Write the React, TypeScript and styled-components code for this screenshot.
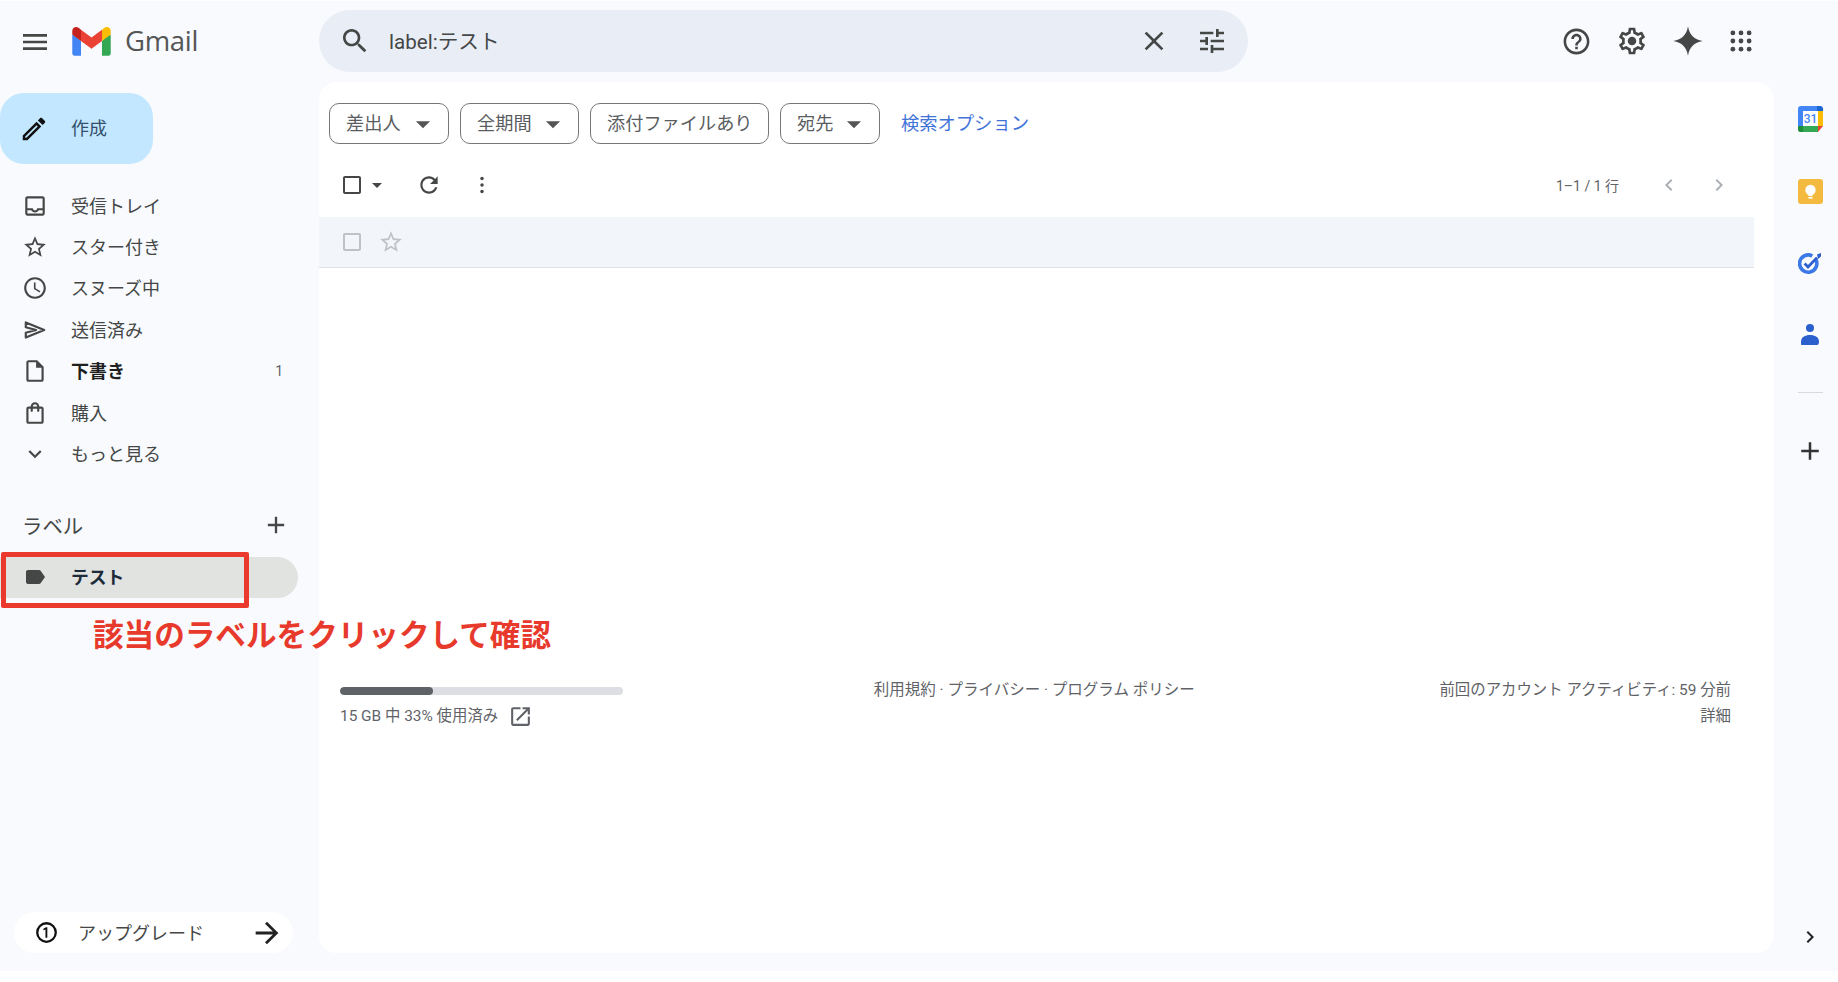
import React from 'react';
import styled, { createGlobalStyle } from 'styled-components';

const Global = createGlobalStyle`
  html, body { margin: 0; padding: 0; background: #fff; }
  body { font-family: Roboto, "Noto Sans CJK JP", sans-serif; color: #444746; }
  * { box-sizing: border-box; }
`;

const Page = styled.div`
  width: 1838px;
  height: 982px;
  padding-top: 1px;
  overflow: hidden;
  background: #fff;
`;
const Shell = styled.div`
  height: 970px;
  background: #f8fafd;
  display: grid;
  grid-template-columns: 319px 1455px 64px;
  grid-template-rows: 81px 871px 18px;
`;
const Brand = styled.div`
  display: flex;
  align-items: center;
  padding-left: 19px;
`;
const Wordmark = styled.span`
  margin: 0 0 2px 14px;
  font-family: "Open Sans", sans-serif;
  font-size: 27.5px;
  letter-spacing: -0.3px;
  color: #555;
`;
const LogoSvg = styled.svg`
  width: 39px;
  height: 29px;
  margin-left: 21px;
  flex: none;
`;
const TopBar = styled.div`
  display: flex;
  align-items: center;
  justify-content: space-between;
  padding-right: 20px;
`;
const SearchBox = styled.div`
  width: 929px;
  height: 62px;
  margin-top: -1px;
  border-radius: 31px;
  background: #e9eef6;
  display: flex;
  align-items: center;
  padding: 0 20px;
`;
const SearchText = styled.span`
  margin: 0 0 3px 18px;
  flex: 1;
  font-size: 20.6px;
  color: #444746;
`;
const Glyph = styled.svg<{ $s?: number; $c?: string; $ml?: number }>`
  width: ${p => p.$s ?? 24}px;
  height: ${p => p.$s ?? 24}px;
  margin-left: ${p => p.$ml ?? 0}px;
  fill: ${p => p.$c ?? '#444746'};
  flex: none;
  display: block;
`;
const StrokeGlyph = styled.svg`
  width: 26px;
  height: 26px;
  fill: none;
  stroke: #444746;
  stroke-width: 2;
  stroke-linejoin: round;
  flex: none;
  display: block;
`;
const Actions = styled.div`
  display: flex;
  align-items: center;
  gap: 24px;
  margin-top: -1px;
`;
const Sidebar = styled.aside`
  grid-row: 2;
  grid-column: 1;
  display: flex;
  flex-direction: column;
  padding-top: 11px;
`;
const Compose = styled.div`
  width: 153px;
  height: 71px;
  border-radius: 24px;
  background: #c2e7ff;
  display: flex;
  align-items: center;
  padding-left: 19px;
  gap: 22px;
  font-size: 18px;
  color: #34506b;
`;
const ComposeText = styled.span`
  margin-bottom: 4px;
`;
const Nav = styled.nav`
  margin-top: 21px;
  display: flex;
  flex-direction: column;
`;
const Row = styled.div<{ $bold?: boolean }>`
  height: 41.4px;
  display: flex;
  align-items: center;
  gap: 23px;
  padding: 0 22px;
  font-size: 18px;
  font-weight: ${p => (p.$bold ? 700 : 400)};
  color: ${p => (p.$bold ? '#1f1f1f' : '#444746')};
`;
const RowText = styled.span`
  margin-bottom: 2px;
`;
const Count = styled.span`
  margin-left: auto;
  font-size: 14px;
  font-weight: 400;
  color: #5f6368;
  margin-right: 14px;
`;
const LabelsHead = styled.div`
  margin-top: 30px;
  height: 41px;
  display: flex;
  align-items: center;
  justify-content: space-between;
  padding: 0 9px 0 22px;
  font-size: 20.4px;
  color: #444746;
  width: 299px;
`;
const LabelRow = styled.div`
  position: relative;
  margin-top: 11px;
  width: 298px;
  height: 41px;
  border-radius: 0 21px 21px 0;
  background: #e0e3df;
  display: flex;
  align-items: center;
  gap: 24px;
  padding-left: 23px;
  font-size: 17.8px;
  font-weight: 700;
  color: #1d2b3a;
`;
const RedBox = styled.div`
  position: absolute;
  left: 1px;
  top: -5px;
  width: 248px;
  height: 56px;
  border: 5px solid #ea3a2d;
  border-radius: 2px;
`;
const Annotation = styled.div`
  position: absolute;
  left: 93px;
  top: 59px;
  z-index: 2;
  white-space: nowrap;
  font-size: 30.6px;
  line-height: 40px;
  font-weight: 700;
  color: #e83a2c;
`;
const Upgrade = styled.div`
  margin: auto 0 0 14px;
  width: 279px;
  height: 41px;
  border-radius: 21px;
  background: #fff;
  display: flex;
  align-items: center;
  padding: 0 9px 0 20px;
  font-size: 18px;
  color: #444746;
`;
const UpgradeText = styled.span`
  margin: 0 0 2px 19px;
  flex: 1;
`;
const Panel = styled.main`
  grid-row: 2;
  grid-column: 2;
  background: #fff;
  border-radius: 18px;
  display: flex;
  flex-direction: column;
`;
const Filters = styled.div`
  margin-top: 21px;
  padding-left: 10px;
  display: flex;
  align-items: center;
  gap: 11px;
`;
const Chip = styled.div<{ $w: number }>`
  width: ${p => p.$w}px;
  height: 41px;
  border: 1.2px solid #747775;
  border-radius: 10px;
  display: flex;
  align-items: center;
  padding: 0 0 4px 16px;
  font-size: 18.2px;
  color: #5a5d5f;
  white-space: nowrap;
`;
const ChipCaret = styled(Glyph)`
  margin: 4px 8px 0 auto;
`;
const FilterLink = styled.span`
  margin: 0 0 4px 10px;
  font-size: 18.3px;
  color: #3f73d9;
`;
const Toolbar = styled.div`
  margin-top: 21px;
  height: 40px;
  padding: 0 43px 0 21px;
  display: flex;
  align-items: center;
`;
const Pager = styled.span`
  margin-left: auto;
  font-size: 14px;
  color: #5f6368;
`;
const MailRow = styled.div`
  margin: 12px 20px 0 0;
  height: 51px;
  background: #f2f5fa;
  border-bottom: 1px solid #dde2e8;
  display: flex;
  align-items: center;
  padding-left: 21px;
`;
const Footer = styled.footer`
  margin-top: 414px;
  padding: 0 43px 0 21px;
  display: flex;
  justify-content: space-between;
  font-size: 15.4px;
  line-height: 26px;
  color: #5f6368;
`;
const Storage = styled.div`
  width: 283px;
  padding-top: 5px;
`;
const Track = styled.div`
  height: 8px;
  border-radius: 4px;
  background: #dcdee3;
  overflow: hidden;
`;
const Fill = styled.div`
  width: 33%;
  height: 100%;
  border-radius: 4px;
  background: #5f6368;
`;
const StorageText = styled.div`
  margin-top: 8px;
  display: flex;
  align-items: center;
  gap: 10px;
  font-size: 15.4px;
`;
const Policies = styled.div`
  margin: -5px 0 0 6px;
  font-size: 15.5px;
`;
const Activity = styled.div`
  margin-top: -5px;
  text-align: right;
`;
const Rail = styled.div`
  grid-row: 1 / 3;
  grid-column: 3;
  display: flex;
  flex-direction: column;
  align-items: center;
  padding: 105px 0 0 8px;
`;
const RailItem = styled.div<{ $h: number }>`
  height: ${p => p.$h}px;
  display: flex;
  justify-content: center;
`;
const RailRule = styled.div`
  width: 25px;
  height: 1px;
  background: #d7d9dc;
  margin-bottom: 43px;
`;
const RailBottom = styled.div`
  margin-top: auto;
  margin-bottom: 4px;
`;

const P = {
  menu: 'M3 18h18v-2H3v2zm0-5h18v-2H3v2zm0-7v2h18V6H3z',
  edit: 'M3 17.25V21h3.75L17.81 9.94l-3.75-3.75L3 17.25zM5.92 19H5v-.92l9.06-9.06.92.92L5.92 19zM20.71 5.63l-2.34-2.34c-.2-.2-.45-.29-.71-.29s-.51.1-.7.29l-1.83 1.83 3.75 3.75 1.83-1.83c.39-.39.39-1.02 0-1.41z',
  inbox: 'M19 3H5c-1.1 0-2 .9-2 2v14c0 1.1.9 2 2 2h14c1.1 0 2-.9 2-2V5c0-1.1-.9-2-2-2zm0 16H5v-3h3.56c.69 1.19 1.97 2 3.45 2s2.75-.81 3.45-2H19v3zm0-5h-4.99c0 1.1-.9 2-2 2s-2-.9-2-2H5V5h14v9z',
  star: 'M22 9.24l-7.19-.62L12 2 9.19 8.63 2 9.24l5.46 4.73L5.82 21 12 17.27 18.18 21l-1.63-7.03L22 9.24zM12 15.4l-3.76 2.27 1-4.28-3.32-2.88 4.38-.38L12 6.1l1.71 4.04 4.38.38-3.32 2.88 1 4.28L12 15.4z',
  clock: 'M11.99 2C6.47 2 2 6.48 2 12s4.47 10 9.99 10C17.52 22 22 17.52 22 12S17.52 2 11.99 2zM12 20c-4.42 0-8-3.58-8-8s3.58-8 8-8 8 3.58 8 8-3.58 8-8 8zm.5-13H11v6l5.25 3.15.75-1.23-4.5-2.67z',
  draft: 'M14 2H6c-1.1 0-1.99.9-1.99 2L4 20c0 1.1.89 2 1.99 2H18c1.1 0 2-.9 2-2V8l-6-6zM6 20V4h7v5h5v11H6z',
  bag: 'M18 6h-2c0-2.21-1.79-4-4-4S8 3.79 8 6H6c-1.1 0-2 .9-2 2v12c0 1.1.9 2 2 2h12c1.1 0 2-.9 2-2V8c0-1.1-.9-2-2-2zm-6-2c1.1 0 2 .9 2 2h-4c0-1.1.9-2 2-2zm6 16H6V8h2v2c0 .55.45 1 1 1s1-.45 1-1V8h4v2c0 .55.45 1 1 1s1-.45 1-1V8h2v12z',
  more: 'M16.59 8.59L12 13.17 7.41 8.59 6 10l6 6 6-6z',
  add: 'M19 13h-6v6h-2v-6H5v-2h6V5h2v6h6v2z',
  label: 'M17.63 5.84C17.27 5.33 16.67 5 16 5L5 5.01C3.9 5.01 3 5.9 3 7v10c0 1.1.9 1.99 2 1.99L16 19c.67 0 1.27-.33 1.63-.84L22 12l-4.37-6.16z',
  search: 'M15.5 14h-.79l-.28-.27C15.41 12.59 16 11.11 16 9.5 16 5.91 13.09 3 9.5 3S3 5.91 3 9.5 5.91 16 9.5 16c1.61 0 3.09-.59 4.23-1.57l.27.28v.79l5 4.99L20.49 19l-4.99-5zm-6 0C7.01 14 5 11.99 5 9.5S7.01 5 9.5 5 14 7.01 14 9.5 11.99 14 9.5 14z',
  close: 'M19 6.41L17.59 5 12 10.59 6.41 5 5 6.41 10.59 12 5 17.59 6.41 19 12 13.41 17.59 19 19 17.59 13.41 12z',
  tune: 'M3 17v2h6v-2H3zM3 5v2h10V5H3zm10 16v-2h8v-2h-8v-2h-2v6h2zM7 9v2H3v2h4v2h2V9H7zm14 4v-2H11v2h10zm-6-4h2V7h4V5h-4V3h-2v6z',
  help: 'M11 18h2v-2h-2v2zm1-16C6.48 2 2 6.48 2 12s4.48 10 10 10 10-4.48 10-10S17.52 2 12 2zm0 18c-4.41 0-8-3.59-8-8s3.59-8 8-8 8 3.59 8 8-3.59 8-8 8zm0-14c-2.21 0-4 1.79-4 4h2c0-1.1.9-2 2-2s2 .9 2 2c0 2-3 1.75-3 5h2c0-2.25 3-2.5 3-5 0-2.21-1.79-4-4-4z',
  gear: 'M19.43 12.98c.04-.32.07-.64.07-.98 0-.34-.03-.66-.07-.98l2.11-1.65c.19-.15.24-.42.12-.64l-2-3.46c-.09-.16-.26-.25-.44-.25-.06 0-.12.01-.17.03l-2.49 1c-.52-.4-1.08-.73-1.69-.98l-.38-2.65C14.46 2.18 14.25 2 14 2h-4c-.25 0-.46.18-.49.42l-.38 2.65c-.61.25-1.17.59-1.69.98l-2.49-1c-.06-.02-.12-.03-.18-.03-.17 0-.34.09-.43.25l-2 3.46c-.13.22-.07.49.12.64l2.11 1.65c-.04.32-.07.65-.07.98 0 .33.03.66.07.98l-2.11 1.65c-.19.15-.24.42-.12.64l2 3.46c.09.16.26.25.44.25.06 0 .12-.01.17-.03l2.49-1c.52.4 1.08.73 1.69.98l.38 2.65c.03.24.24.42.49.42h4c.25 0 .46-.18.49-.42l.38-2.65c.61-.25 1.17-.59 1.69-.98l2.49 1c.06.02.12.03.18.03.17 0 .34-.09.43-.25l2-3.46c.12-.22.07-.49-.12-.64l-2.11-1.65zm-1.98-1.71c.04.31.05.52.05.73 0 .21-.02.43-.05.73l-.14 1.13.89.7 1.08.84-.7 1.21-1.27-.51-1.04-.42-.9.68c-.43.32-.84.56-1.25.73l-1.06.43-.16 1.13-.2 1.35h-1.4l-.19-1.35-.16-1.13-1.06-.43c-.43-.18-.83-.41-1.23-.71l-.91-.7-1.06.43-1.27.51-.7-1.21 1.08-.84.89-.7-.14-1.13c-.03-.31-.05-.54-.05-.74s.02-.43.05-.73l.14-1.13-.89-.7-1.08-.84.7-1.21 1.27.51 1.04.42.9-.68c.43-.32.84-.56 1.25-.73l1.06-.43.16-1.13.2-1.35h1.39l.19 1.35.16 1.13 1.06.43c.43.18.83.41 1.23.71l.91.7 1.06-.43 1.27-.51.7 1.21-1.07.85-.89.7.14 1.13z',
  spark: 'M12 1C13 7.4 16.6 11 23 12 16.6 13 13 16.6 12 23 11 16.6 7.4 13 1 12 7.4 11 11 7.4 12 1Z',
  refresh: 'M17.65 6.35C16.2 4.9 14.21 4 12 4c-4.42 0-7.99 3.58-7.99 8s3.57 8 7.99 8c3.73 0 6.84-2.55 7.73-6h-2.08c-.82 2.33-3.04 4-5.65 4-3.31 0-6-2.69-6-6s2.69-6 6-6c1.66 0 3.14.69 4.22 1.78L13 11h7V4l-2.35 2.35z',
  open: 'M19 19H5V5h7V3H5c-1.11 0-2 .9-2 2v14c0 1.1.89 2 2 2h14c1.1 0 2-.9 2-2v-7h-2v7zM14 3v2h3.59l-9.83 9.83 1.41 1.41L19 6.41V10h2V3h-7z',
  arrow: 'M12 4l-1.41 1.41L16.17 11H4v2h12.17l-5.58 5.59L12 20l8-8z',
  left: 'M15.41 7.41L14 6l-6 6 6 6 1.41-1.41L10.83 12z',
  right: 'M10 6L8.59 7.41 13.17 12l-4.58 4.59L10 18l6-6z',
  box: 'M19 5v14H5V5h14m0-2H5c-1.1 0-2 .9-2 2v14c0 1.1.9 2 2 2h14c1.1 0 2-.9 2-2V5c0-1.1-.9-2-2-2z',
  caret: 'M7 10l5 5 5-5z',
  one: 'M12 2a10 10 0 1 0 0 20 10 10 0 0 0 0-20zm0 2.2a7.8 7.8 0 1 1 0 15.6 7.8 7.8 0 0 1 0-15.6zM12.8 7h-1.3L9 8.3v1.6l2-.9V17h1.8z',
};

type IconProps = { d: string; s?: number; c?: string; ml?: number };
const Icon = ({ d, s, c, ml }: IconProps) => (
  <Glyph viewBox="0 0 24 24" $s={s} $c={c} $ml={ml}><path d={d} /></Glyph>
);

const GmailLogo = () => (
  <LogoSvg viewBox="0 0 256 193">
    <path fill="#4285F4" d="M58.182 192.05V93.14L27.507 65.077 0 49.504v125.091c0 9.658 7.825 17.455 17.455 17.455h40.727Z" />
    <path fill="#34A853" d="M197.818 192.05h40.727c9.659 0 17.455-7.826 17.455-17.455V49.505l-31.156 17.837-27.026 25.798v98.91Z" />
    <path fill="#EA4335" d="m58.182 93.14-4.174-38.647 4.174-36.989L128 69.868l69.818-52.364 4.67 34.992-4.67 40.644L128 145.504z" />
    <path fill="#FBBC04" d="M197.818 17.504V93.14L256 49.504V26.231c0-21.585-24.64-33.89-41.89-20.945l-16.292 12.218Z" />
    <path fill="#C5221F" d="m0 49.504 26.759 20.07L58.182 93.14V17.504L41.89 5.286C24.61-7.66 0 4.646 0 26.23v23.273Z" />
  </LogoSvg>
);

const SendIcon = () => (
  <StrokeGlyph viewBox="0 0 24 24">
    <path d="M3.5 5L20.5 12 3.5 19V14.5L13 12 3.5 9.5Z" />
  </StrokeGlyph>
);
const AppsIcon = () => (
  <Glyph viewBox="0 0 24 24" $s={26}>
    {[4.5, 12, 19.5].flatMap(y => [4.5, 12, 19.5].map(x => <circle key={`${x}-${y}`} cx={x} cy={y} r="2.2" />))}
  </Glyph>
);
const GearIcon = () => (
  <Glyph viewBox="0 0 24 24" $s={32}>
    <path d={P.gear} />
    <circle cx="12" cy="12" r="3.2" />
  </Glyph>
);
const DotsIcon = () => (
  <Glyph viewBox="0 0 24 24" $s={22} $ml={29}>
    <circle cx="12" cy="5" r="1.9" />
    <circle cx="12" cy="12" r="1.9" />
    <circle cx="12" cy="19" r="1.9" />
  </Glyph>
);
const CalendarIcon = () => (
  <svg width="25" height="26" viewBox="0 0 25 26">
    <path fill="#4285f4" d="M3 0h18v5H5v15H0V3a3 3 0 0 1 3-3z" />
    <path fill="#1967d2" d="M19 0h3a3 3 0 0 1 3 3v3h-6z" />
    <path fill="#fbbc04" d="M20 5h5v15h-5z" />
    <path fill="#34a853" d="M0 20h20v6H3a3 3 0 0 1-3-3z" />
    <path fill="#1e8e3e" d="M0 20h5v6H3a3 3 0 0 1-3-3z" />
    <path fill="#ea4335" d="M20 20h5l-5 6z" />
    <rect x="5" y="5" width="15" height="15" fill="#fff" />
    <text x="12.5" y="17" textAnchor="middle" fontFamily="Roboto, sans-serif" fontSize="12" fontWeight="500" fill="#4285f4">31</text>
  </svg>
);
const KeepIcon = () => (
  <svg width="25" height="25" viewBox="0 0 25 25">
    <rect width="25" height="25" rx="3" fill="#f4b93f" />
    <circle cx="12.5" cy="11" r="5.2" fill="#fff" />
    <rect x="10.4" y="14" width="4.2" height="3" fill="#fff" />
    <rect x="10.4" y="18" width="4.2" height="1.6" fill="#fff" />
  </svg>
);
const TasksIcon = () => (
  <svg width="24" height="22" viewBox="0 0 24 22">
    <path fill="none" stroke="#3b78e7" strokeWidth="3.6" d="M17.5 6a8.6 8.6 0 1 1-3.2-3" />
    <path fill="none" stroke="#2c5fce" strokeWidth="2.8" d="M6.6 10.6l3.4 3.4 9-9.4" />
    <path fill="#2c5fce" d="M19 1.5L23 0v3.5L20 6z" />
  </svg>
);
const ContactsIcon = () => (
  <svg width="18" height="21" viewBox="0 0 18 21">
    <circle cx="9" cy="4" r="4" fill="#2c5fce" />
    <path fill="#2c5fce" d="M1 21c-.6 0-1-.4-1-1v-2c0-5 4-7 9-7s9 2 9 7c0 2-1 3-2 3z" />
  </svg>
);

type Item = { d?: string; t: string; bold?: boolean; count?: number };
const items: Item[] = [
  { d: P.inbox, t: '受信トレイ' },
  { d: P.star, t: 'スター付き' },
  { d: P.clock, t: 'スヌーズ中' },
  { t: '送信済み' },
  { d: P.draft, t: '下書き', bold: true, count: 1 },
  { d: P.bag, t: '購入' },
  { d: P.more, t: 'もっと見る' },
];
const chips = [
  { t: '差出人', w: 120, caret: true },
  { t: '全期間', w: 119, caret: true },
  { t: '添付ファイルあり', w: 179, caret: false },
  { t: '宛先', w: 100, caret: true },
];

export default function App() {
  return (
    <Page>
      <Global />
      <Shell>
        <Brand>
          <Icon d={P.menu} s={32} />
          <GmailLogo />
          <Wordmark>Gmail</Wordmark>
        </Brand>
        <TopBar>
          <SearchBox>
            <Icon d={P.search} s={32} />
            <SearchText>label:テスト</SearchText>
            <Icon d={P.close} s={32} />
            <Icon d={P.tune} s={32} ml={26} />
          </SearchBox>
          <Actions>
            <Icon d={P.help} s={31} />
            <GearIcon />
            <Icon d={P.spark} s={32} />
            <AppsIcon />
          </Actions>
        </TopBar>
        <Rail>
          <RailItem $h={73}><CalendarIcon /></RailItem>
          <RailItem $h={74}><KeepIcon /></RailItem>
          <RailItem $h={71}><TasksIcon /></RailItem>
          <RailItem $h={68}><ContactsIcon /></RailItem>
          <RailRule />
          <Icon d={P.add} s={30} c="#333" />
          <RailBottom><Icon d={P.right} s={24} c="#222" /></RailBottom>
        </Rail>
        <Sidebar>
          <Compose>
            <Icon d={P.edit} s={30} c="#111" />
            <ComposeText>作成</ComposeText>
          </Compose>
          <Nav>
            {items.map(i => (
              <Row key={i.t} $bold={i.bold}>
                {i.d ? <Icon d={i.d} s={26} /> : <SendIcon />}
                <RowText>{i.t}</RowText>
                {i.count ? <Count>{i.count}</Count> : null}
              </Row>
            ))}
          </Nav>
          <LabelsHead>
            <span>ラベル</span>
            <Icon d={P.add} s={28} />
          </LabelsHead>
          <LabelRow>
            <Icon d={P.label} />
            <RowText>テスト</RowText>
            <RedBox />
            <Annotation>該当のラベルをクリックして確認</Annotation>
          </LabelRow>
          <Upgrade>
            <Icon d={P.one} s={25} c="#111" />
            <UpgradeText>アップグレード</UpgradeText>
            <Icon d={P.arrow} s={34} c="#222" />
          </Upgrade>
        </Sidebar>
        <Panel>
          <Filters>
            {chips.map(c => (
              <Chip key={c.t} $w={c.w}>
                {c.t}
                {c.caret ? <ChipCaret viewBox="0 0 24 24" $s={34} $c="#555"><path d={P.caret} /></ChipCaret> : null}
              </Chip>
            ))}
            <FilterLink>検索オプション</FilterLink>
          </Filters>
          <Toolbar>
            <Icon d={P.box} s={24} />
            <Icon d={P.caret} s={24} ml={1} />
            <Icon d={P.refresh} s={26} ml={27} />
            <DotsIcon />
            <Pager>1–1 / 1 行</Pager>
            <Icon d={P.left} s={24} c="#aab0b5" ml={38} />
            <Icon d={P.right} s={24} c="#aab0b5" ml={26} />
          </Toolbar>
          <MailRow>
            <Icon d={P.box} c="#bfc3c7" />
            <Icon d={P.star} s={26} c="#bfc3c7" ml={14} />
          </MailRow>
          <Footer>
            <Storage>
              <Track><Fill /></Track>
              <StorageText>
                15 GB 中 33% 使用済み
                <Icon d={P.open} s={25} c="#5f6368" />
              </StorageText>
            </Storage>
            <Policies>利用規約 · プライバシー · プログラム ポリシー</Policies>
            <Activity>
              前回のアカウント アクティビティ: 59 分前
              <br />
              詳細
            </Activity>
          </Footer>
        </Panel>
      </Shell>
    </Page>
  );
}
